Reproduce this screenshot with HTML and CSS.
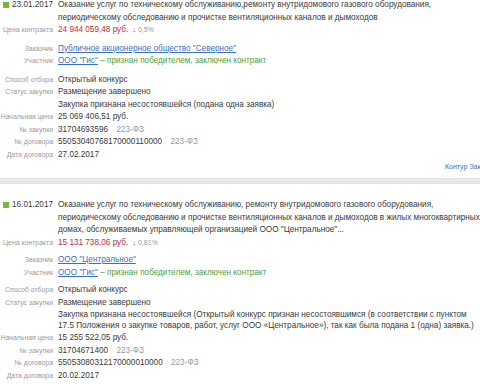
FILE: index.html
```html
<!DOCTYPE html>
<html lang="ru">
<head>
<meta charset="utf-8">
<link rel="stylesheet" href="styles.css">
</head>
<body>
<div class="item">
  <div class="row head">
    <div class="label date"><span class="sq"></span>23.01.2017</div>
    <div class="value desc">Оказание услуг по техническому обслуживанию,ремонту внутридомового газового оборудования,<br>периодическому обследованию и прочистке вентиляционных каналов и дымоходов</div>
  </div>
  <div class="row">
    <div class="label">Цена контракта</div>
    <div class="value"><span class="price">24 944 059,48 руб.</span> <span class="pct"><span class="arr">↓</span> 0,5%</span></div>
  </div>
  <div class="group">
    <div class="row">
      <div class="label">Заказчик</div>
      <div class="value"><a class="link">Публичное акционерное общество "Северное"</a></div>
    </div>
    <div class="row">
      <div class="label">Участник</div>
      <div class="value"><a class="link">ООО "Гис"</a> <span class="win">– признан победителем, заключен контракт</span></div>
    </div>
  </div>
  <div class="group">
    <div class="row">
      <div class="label">Способ отбора</div>
      <div class="value">Открытый конкурс</div>
    </div>
    <div class="row">
      <div class="label">Статус закупки</div>
      <div class="value">Размещение завершено</div>
    </div>
    <div class="row">
      <div class="label"></div>
      <div class="value">Закупка признана несостоявшейся (подана одна заявка)</div>
    </div>
    <div class="row">
      <div class="label">Начальная цена</div>
      <div class="value">25 069 406,51 руб.</div>
    </div>
    <div class="row">
      <div class="label">№ закупки</div>
      <div class="value">31704693596 <span class="law">223-ФЗ</span></div>
    </div>
    <div class="row">
      <div class="label">№ договора</div>
      <div class="value">55053040768170000110000 <span class="law">223-ФЗ</span></div>
    </div>
    <div class="row">
      <div class="label">Дата договора</div>
      <div class="value">27.02.2017</div>
    </div>
  </div>
  <div class="source"><a class="src">Контур Закупки</a></div>
</div>
<div class="sep"></div>
<div class="item second">
  <div class="row head">
    <div class="label date"><span class="sq"></span>16.01.2017</div>
    <div class="value desc">Оказание услуг по техническому обслуживанию, ремонту внутридомового газового оборудования,<br>периодическому обследованию и прочистке вентиляционных каналов и дымоходов в жилых многоквартирных<br>домах, обслуживаемых управляющей организацией ООО "Центральное"...</div>
  </div>
  <div class="row">
    <div class="label">Цена контракта</div>
    <div class="value"><span class="price">15 131 738,06 руб.</span> <span class="pct"><span class="arr">↓</span> 0,81%</span></div>
  </div>
  <div class="group">
    <div class="row">
      <div class="label">Заказчик</div>
      <div class="value"><a class="link">ООО "Центральное"</a></div>
    </div>
    <div class="row">
      <div class="label">Участник</div>
      <div class="value"><a class="link">ООО "Гис"</a> <span class="win">– признан победителем, заключен контракт</span></div>
    </div>
  </div>
  <div class="group">
    <div class="row">
      <div class="label">Способ отбора</div>
      <div class="value">Открытый конкурс</div>
    </div>
    <div class="row">
      <div class="label">Статус закупки</div>
      <div class="value">Размещение завершено</div>
    </div>
    <div class="row">
      <div class="label"></div>
      <div class="value multi">Закупка признана несостоявшейся (Открытый конкурс признан несостоявшимся (в соответствии с пунктом<br>17.5 Положения о закупке товаров, работ, услуг ООО «Центральное»), так как была подана 1 (одна) заявка.)</div>
    </div>
    <div class="row">
      <div class="label">Начальная цена</div>
      <div class="value">15 255 522,05 руб.</div>
    </div>
    <div class="row">
      <div class="label">№ закупки</div>
      <div class="value">31704671400 <span class="law">223-ФЗ</span></div>
    </div>
    <div class="row">
      <div class="label">№ договора</div>
      <div class="value">55053080312170000010000 <span class="law">223-ФЗ</span></div>
    </div>
    <div class="row">
      <div class="label">Дата договора</div>
      <div class="value">20.02.2017</div>
    </div>
  </div>
</div>
</body>
</html>
```

FILE: styles.css
```css
html, body {
  margin: 0;
  padding: 0;
  background: #fff;
  width: 480px;
  height: 384px;
  overflow: hidden;
}
body {
  font-family: "Liberation Sans", Arial, sans-serif;
  font-size: 8.2px;
  color: #3a3a3a;
  line-height: 12.5px;
}
.item {
  margin-top: -1px;
}
.item.second {
  margin-top: 0;
  padding-top: 15px;
}
.row {
  display: grid;
  grid-template-columns: 53px 1fr;
  column-gap: 5px;
}
.label {
  text-align: right;
  color: #9a9a9a;
  font-size: 6.9px;
  white-space: nowrap;
}
.label.date {
  display: flex;
  align-items: center;
  justify-content: flex-end;
  gap: 3px;
  font-size: 8.2px;
  color: #3a3a3a;
  height: 12.5px;
}
.sq {
  width: 6px;
  height: 6px;
  background: #6fba3c;
  flex: none;
}
.value {
  white-space: nowrap;
}
.price {
  color: #b8323a;
}
.pct {
  color: #9a9a9a;
  font-size: 7px;
  margin-left: 2px;
}
.arr {
  color: #555;
  font-weight: bold;
}
.group {
  margin-top: 6px;
}
.second .group {
  margin-top: 5px;
}
.multi {
  line-height: 10.5px;
  padding: 1px 0;
}
.link {
  color: #3b6fc4;
  text-decoration: underline;
}
.win {
  color: #4fa03a;
}
.law {
  color: #9a9a9a;
  margin-left: 6px;
}
.source {
  padding-left: 445px;
  white-space: nowrap;
  font-size: 7px;
  line-height: 12px;
}
.src {
  color: #3b6fc4;
}
.sep {
  margin-top: 5px;
  height: 5px;
  background: linear-gradient(#ececec, #e2e2e2);
  border-top: 1px solid #e4e4e4;
}
```
